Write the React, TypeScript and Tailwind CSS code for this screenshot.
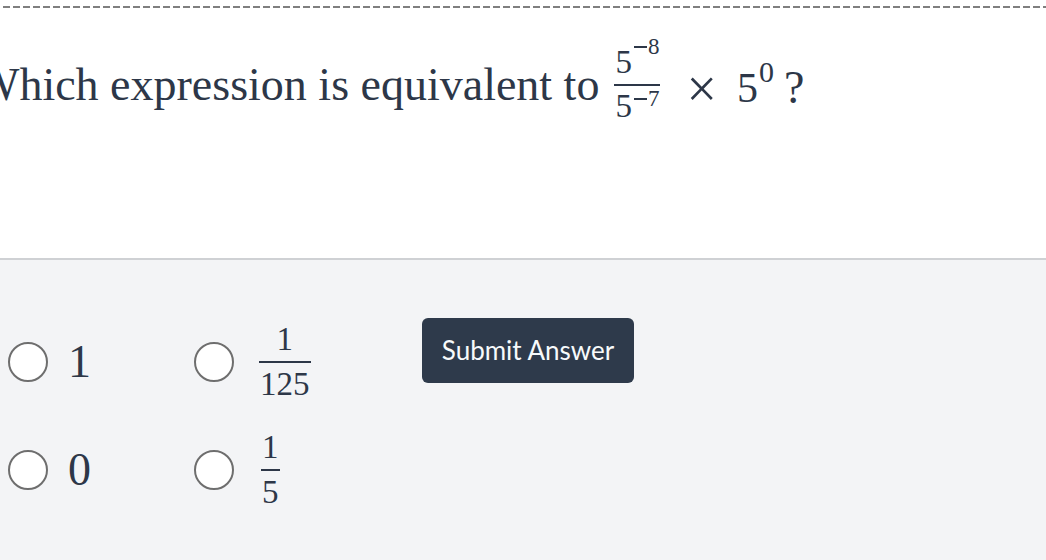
import React from "react";

const serif = { fontFamily: '"Liberation Serif", "Times New Roman", serif' };

function Frac({ num, den }: { num: React.ReactNode; den: React.ReactNode }) {
  return (
    <span className="inline-flex flex-col items-center leading-none text-[33px]">
      <span className="px-[1px]">{num}</span>
      <span className="my-[5px] block h-[2px] w-full bg-[#2d3748]" />
      <span className="px-[1px]">{den}</span>
    </span>
  );
}

function Radio() {
  return <span className="block h-[40px] w-[40px] shrink-0 rounded-full border-2 border-[#6e6e6e] bg-white" />;
}

function Pow({ base, exp, lift }: { base: string; exp: string; lift: string }) {
  return (
    <span className="flex items-start px-[1px]">
      {base}
      <span className={`ml-[2px] flex items-center text-[23px] ${lift}`}>
        <span className="mr-[1px] inline-block h-[2px] w-[13px] bg-[#2d3748]" />
        {exp}
      </span>
    </span>
  );
}

export default function App() {
  return (
    <div className="h-[560px] w-[1046px] overflow-hidden bg-white text-[#2d3748]" style={serif}>
      <div className="h-[260px] border-b-2 border-[#cfd1d4] pt-[6px]">
        <div className="h-[2px] w-full bg-[repeating-linear-gradient(90deg,transparent_0_3px,#7f7f7f_3px_10px)]" />
        <div className="ml-[-24px] mt-[38px] flex items-center text-[46px] leading-none">
          <span>Which expression is equivalent to</span>
          <span className="ml-[15px] inline-flex flex-col items-center leading-none text-[33px]">
            <Pow base="5" exp="8" lift="mt-[-11px]" />
            <span className="mb-[4px] mt-[5px] block h-[2px] w-full bg-[#2d3748]" />
            <Pow base="5" exp="7" lift="mt-[-3px]" />
          </span>
          <span className="ml-[26px] mt-[8px] text-[54px]">×</span>
          <span className="ml-[20px] mt-[6px] flex items-start text-[42px]">
            5<span className="ml-[1px] mt-[-10px] text-[30px]">0</span>
          </span>
          <span className="ml-[10px] mt-[6px]">?</span>
        </div>
      </div>
      <div className="h-[300px] bg-[#f3f4f6] pt-[58px]">
        <div className="flex items-start">
          <div className="ml-[8px] grid grid-cols-[186px_228px] auto-rows-[88px] gap-y-[20px] items-center">
            <div className="flex items-center gap-[20px]">
              <Radio />
              <span className="text-[46px] leading-none">1</span>
            </div>
            <div className="flex items-center gap-[25px]">
              <Radio />
              <Frac num="1" den="125" />
            </div>
            <div className="flex items-center gap-[20px]">
              <Radio />
              <span className="text-[46px] leading-none">0</span>
            </div>
            <div className="flex items-center gap-[27px]">
              <Radio />
              <Frac num="1" den="5" />
            </div>
          </div>
          <button
            className="h-[65px] w-[212px] rounded-[6px] bg-[#2e3a4b] text-[26px] text-[#f7fafc]"
            style={{ fontFamily: 'Lato, "Open Sans", sans-serif' }}
          >
            Submit Answer
          </button>
        </div>
      </div>
    </div>
  );
}
